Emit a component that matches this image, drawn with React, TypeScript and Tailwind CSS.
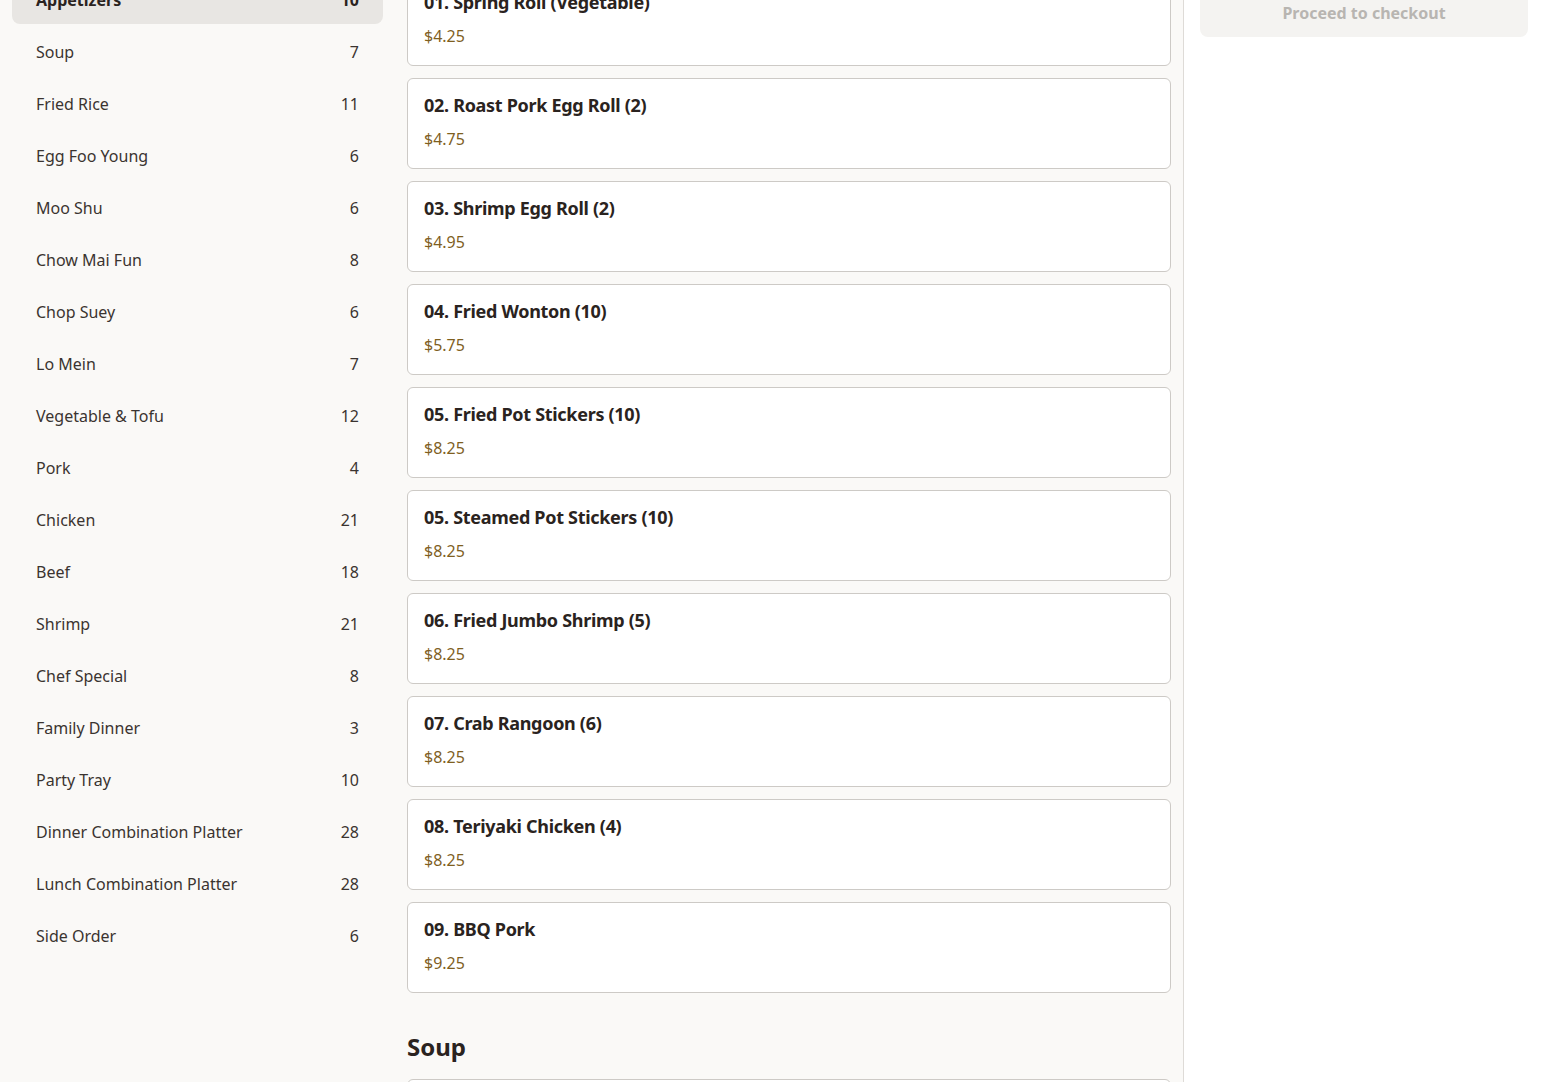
import React from "react";

const categories: [string, number][] = [
  ["Appetizers", 10],
  ["Soup", 7],
  ["Fried Rice", 11],
  ["Egg Foo Young", 6],
  ["Moo Shu", 6],
  ["Chow Mai Fun", 8],
  ["Chop Suey", 6],
  ["Lo Mein", 7],
  ["Vegetable & Tofu", 12],
  ["Pork", 4],
  ["Chicken", 21],
  ["Beef", 18],
  ["Shrimp", 21],
  ["Chef Special", 8],
  ["Family Dinner", 3],
  ["Party Tray", 10],
  ["Dinner Combination Platter", 28],
  ["Lunch Combination Platter", 28],
  ["Side Order", 6],
];

const appetizers: [string, string][] = [
  ["01. Spring Roll (Vegetable)", "$4.25"],
  ["02. Roast Pork Egg Roll (2)", "$4.75"],
  ["03. Shrimp Egg Roll (2)", "$4.95"],
  ["04. Fried Wonton (10)", "$5.75"],
  ["05. Fried Pot Stickers (10)", "$8.25"],
  ["05. Steamed Pot Stickers (10)", "$8.25"],
  ["06. Fried Jumbo Shrimp (5)", "$8.25"],
  ["07. Crab Rangoon (6)", "$8.25"],
  ["08. Teriyaki Chicken (4)", "$8.25"],
  ["09. BBQ Pork", "$9.25"],
];

function MenuCard({ name, price }: { name: string; price: string }) {
  return (
    <div className="rounded-md border border-[#cdcac6] bg-white px-4 pt-[13px] pb-[17px]">
      <h3 className="text-lg leading-[26px] font-bold tracking-[-0.3px] text-[#2a2320]">{name}</h3>
      <p className="mt-[9px] text-base leading-6 text-[#7f5f1f]">{price}</p>
    </div>
  );
}

export default function App() {
  return (
    <div className="flex h-[1082px] overflow-hidden bg-[#faf9f7] font-['Noto_Sans','Open_Sans',sans-serif] text-[#2a2320]">
      <aside className="w-[395px] shrink-0 px-3">
        <nav className="-mt-[24px] flex flex-col gap-1">
          {categories.map(([name, count], i) => (
            <div
              key={name}
              className={
                i === 0
                  ? "flex h-12 items-center justify-between rounded-lg bg-[#e8e6e3] px-6 font-bold"
                  : "flex h-12 items-center justify-between rounded-lg px-6 text-[#3a3430]"
              }
            >
              <span>{name}</span>
              <span>{count}</span>
            </div>
          ))}
        </nav>
      </aside>

      <main className="flex-1 border-r border-[#dedbd7] px-3">
        <div className="-mt-[25px] flex flex-col gap-3">
          {appetizers.map(([name, price]) => (
            <MenuCard key={name} name={name} price={price} />
          ))}
        </div>
        <h2 className="mt-[38px] mb-[16px] text-2xl leading-8 font-bold">Soup</h2>
        <MenuCard name="Hot & Sour Soup" price="$3.25" />
      </main>

      <aside className="w-[360px] shrink-0 bg-white px-4">
        <button className="-mt-[11px] h-12 w-full rounded-lg bg-[#f4f3f1] text-base font-bold text-[#b8b5b1]">
          Proceed to checkout
        </button>
      </aside>
    </div>
  );
}
